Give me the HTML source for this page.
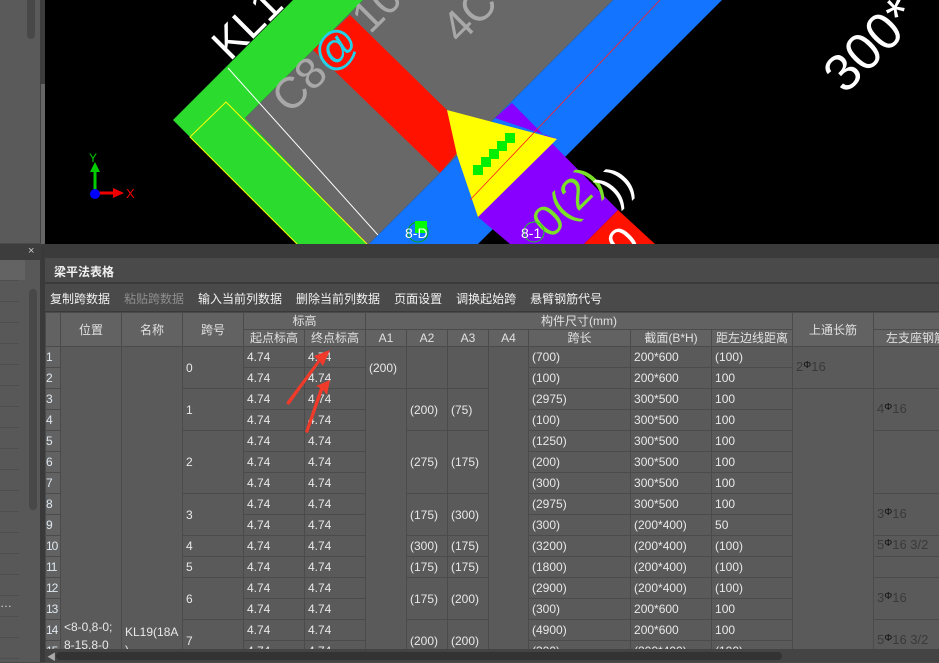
<!DOCTYPE html>
<html><head><meta charset="utf-8"><style>
*{margin:0;padding:0;box-sizing:border-box}
body{width:939px;height:662px;overflow:hidden;background:#4a4a4a;font-family:"Liberation Sans","Noto Sans CJK SC",sans-serif;position:relative}
.abs{position:absolute}
table{border-collapse:collapse;table-layout:fixed;font-size:12px;color:#e8e8e8}
td{border:1px solid #4b4b4b;background:#5a5a5a;padding:0 0 0 3px;white-space:nowrap;overflow:hidden;vertical-align:middle;line-height:14px;height:21px}
tr.h td{background:#626262;text-align:center;padding:0;color:#e0e0e0;height:17px;line-height:14px}
td.rn{background:#626262;padding:0;color:#dfe8f0;font-size:12px;letter-spacing:-1px}
.r{color:#3a3a3a;font-size:13px}
.r b{font-weight:normal;color:#111;font-size:10px;position:relative;top:-3px}
</style></head><body>
<div class="abs" style="left:0;top:0;width:41px;height:243px;background:#5a5a5a;border-right:1px solid #3e3e3e"></div>
<div class="abs" style="left:27px;top:0;width:8px;height:39px;background:#484848;border-radius:0 0 4px 4px"></div>
<div class="abs" style="left:41px;top:0;width:4px;height:84px;background:#3d3d3d"></div>
<div class="abs" style="left:41px;top:84px;width:4px;height:160px;background:#666"></div>
<div class="abs" style="left:0;top:244px;width:45px;height:16px;background:#3d3d3d;color:#ccc;font-size:11px"><span style="position:absolute;left:28px;top:1px">×</span></div>
<div class="abs" style="left:0;top:260px;width:41px;height:402px;background:#585858;border-right:1px solid #3a3a3a"></div>
<div class="abs" style="left:0;top:260px;width:25px;height:20px;background:#636363"></div>
<div class="abs" style="left:29px;top:289px;width:8px;height:221px;background:#484848;border-radius:4px"></div>
<div class="abs" style="left:0;top:260px;width:41px;height:402px;background:repeating-linear-gradient(to bottom,transparent 0,transparent 20px,#4e4e4e 20px,#4e4e4e 21px);clip-path:inset(0 22px 0 0)"></div>
<div class="abs" style="left:0;top:596px;color:#ddd;font-size:12px">…</div>
<div class="abs" style="left:41px;top:244px;width:4px;height:418px;background:#3a3a3a"></div>

<svg class="abs" style="left:45px;top:0" width="894" height="244" viewBox="45 0 894 244">
<rect x="45" y="0" width="894" height="244" fill="#000"/>
<polygon points="245,118 363,0 613,0 369,244 367,244" fill="#686868"/>
<polygon points="173,120 293,0 363,0 245,118 367,244 297,244" fill="#2bdc2f"/>
<polyline points="297,244 190,137 226,102 367,244" fill="none" stroke="#ffff00" stroke-width="1"/>
<line x1="228" y1="68" x2="386" y2="244" stroke="#fff" stroke-width="1"/>
<polygon points="350,15 447,110 457,153 440,173 313,50" fill="#ff1200"/>
<polygon points="613,0 722,0 478,244 369,244" fill="#1274ff"/>
<polygon points="512,103 618,210 584,244 510,244 478,217 557,139 495,118" fill="#8800ff"/>
<polygon points="618,210 655,244 584,244" fill="#ff1200"/>
<polygon points="447,110 557,139 478,217 457,155" fill="#ffff00"/>
<g fill="#00ee00"><rect x="505" y="133" width="10" height="10"/><rect x="497" y="141" width="10" height="10"/><rect x="489" y="149" width="10" height="10"/><rect x="481" y="157" width="10" height="10"/><rect x="473" y="165" width="10" height="10"/></g>
<line x1="660" y1="0" x2="470" y2="200" stroke="#ff2020" stroke-width="0.8"/>
<g font-family="Liberation Sans" font-size="44">
<text x="0" y="0" fill="#fff" transform="translate(230,62) rotate(-45)">KL1</text>
<text x="0" y="0" fill="#a8a8a8" transform="translate(290,115) rotate(-45)">C8</text>
<text x="0" y="0" fill="#22d0e8" transform="translate(330,75) rotate(-45)">@</text>
<text x="0" y="0" fill="#a8a8a8" transform="translate(370,35) rotate(-45)">10</text>
<text x="0" y="0" fill="#a8a8a8" transform="translate(460,45) rotate(-45)">4C</text>
<text x="0" y="0" fill="#fff" font-size="52" transform="translate(845,95) rotate(-45)">300*</text>
<text x="0" y="0" fill="#7be02a" transform="translate(550,240) rotate(-45)">0(2)</text>
<text x="0" y="0" fill="#fff" transform="translate(615,205) rotate(-45)">))</text>
<text x="0" y="0" fill="#fff" transform="translate(625,262) rotate(-45)">0</text>
</g>
<circle cx="418" cy="232" r="10" fill="none" stroke="#0a0" /><rect x="415" y="221" width="12" height="12" fill="#0f0"/>
<text x="405" y="238" fill="#fff" font-size="14" font-family="Liberation Sans">8-D</text>
<circle cx="534" cy="232" r="10" fill="none" stroke="#2c2"/>
<text x="521" y="238" fill="#fff" font-size="14" font-family="Liberation Sans">8-1</text>
<line x1="95" y1="193" x2="95" y2="168" stroke="#0c0" stroke-width="3"/><polygon points="90,172 100,172 95,162" fill="#0c0"/>
<line x1="95" y1="193" x2="118" y2="193" stroke="#e00" stroke-width="3"/><polygon points="113,188 124,193 113,198" fill="#e00"/>
<circle cx="95" cy="194" r="5" fill="#00f"/>
<text x="89" y="162" fill="#0c0" font-size="12">Y</text><text x="126" y="198" fill="#e00" font-size="13">X</text>
</svg>

<div class="abs" style="left:45px;top:244px;width:894px;height:14px;background:#3b3b3b"></div>
<div class="abs" style="left:45px;top:258px;width:894px;height:24px;background:#4a4a4a;color:#f0f0f0;font-size:12px;font-weight:bold;padding:5px 0 0 9px">梁平法表格</div>
<div class="abs" style="left:45px;top:282px;width:894px;height:2px;background:#3a3a3a"></div>
<div class="abs" style="left:45px;top:284px;width:894px;height:27px;background:#4a4a4a;color:#f2f2f2;font-size:12px;padding:6px 0 0 5px">
<span>复制跨数据</span><span style="margin-left:14px;color:#8e8e8e">粘贴跨数据</span><span style="margin-left:14px">输入当前列数据</span><span style="margin-left:14px">删除当前列数据</span><span style="margin-left:14px">页面设置</span><span style="margin-left:14px">调换起始跨</span><span style="margin-left:14px">悬臂钢筋代号</span></div>
<div class="abs" style="left:45px;top:311px;width:894px;height:2px;background:#3a3a3a"></div>

<div class="abs" style="left:45px;top:312px;width:894px;height:337px;overflow:hidden;background:#5a5a5a">
<table style="width:1000px">
<colgroup><col style="width:15px"><col style="width:61px"><col style="width:61px"><col style="width:61px"><col style="width:61px"><col style="width:61px"><col style="width:41px"><col style="width:41px"><col style="width:41px"><col style="width:40px"><col style="width:102px"><col style="width:81px"><col style="width:81px"><col style="width:81px"><col style="width:172px"></colgroup>
<tr class="h"><td rowspan="2"></td><td rowspan="2">位置</td><td rowspan="2">名称</td><td rowspan="2">跨号</td><td colspan="2">标高</td><td colspan="7">构件尺寸(mm)</td><td rowspan="2">上通长筋</td><td></td></tr>
<tr class="h"><td>起点标高</td><td>终点标高</td><td>A1</td><td>A2</td><td>A3</td><td>A4</td><td>跨长</td><td>截面(B*H)</td><td>距左边线距离</td><td style="text-align:left;padding-left:12px">左支座钢筋</td></tr>
<tr><td class="rn">1</td><td rowspan="15" style="vertical-align:top;padding-top:271px;line-height:18px">&lt;8-0,8-0;<br>8-15,8-0</td><td rowspan="15" style="vertical-align:top;padding-top:276px;line-height:18px">KL19(18A<br>)</td><td rowspan="2">0</td><td>4.74</td><td>4.74</td><td rowspan="2">(200)</td><td rowspan="2"></td><td rowspan="2"></td><td rowspan="15"></td><td>(700)</td><td>200*600</td><td>(100)</td><td rowspan="2" class="r">2<b>Φ</b>16</td><td rowspan="2"></td></tr>
<tr><td class="rn">2</td><td>4.74</td><td>4.74</td><td>(100)</td><td>200*600</td><td>100</td></tr>
<tr><td class="rn">3</td><td rowspan="2">1</td><td>4.74</td><td>4.74</td><td rowspan="13"></td><td rowspan="2">(200)</td><td rowspan="2">(75)</td><td>(2975)</td><td>300*500</td><td>100</td><td rowspan="13"></td><td rowspan="2" class="r">4<b>Φ</b>16</td></tr>
<tr><td class="rn">4</td><td>4.74</td><td>4.74</td><td>(100)</td><td>300*500</td><td>100</td></tr>
<tr><td class="rn">5</td><td rowspan="3">2</td><td>4.74</td><td>4.74</td><td rowspan="3">(275)</td><td rowspan="3">(175)</td><td>(1250)</td><td>300*500</td><td>100</td><td rowspan="3"></td></tr>
<tr><td class="rn">6</td><td>4.74</td><td>4.74</td><td>(200)</td><td>300*500</td><td>100</td></tr>
<tr><td class="rn">7</td><td>4.74</td><td>4.74</td><td>(300)</td><td>300*500</td><td>100</td></tr>
<tr><td class="rn">8</td><td rowspan="2">3</td><td>4.74</td><td>4.74</td><td rowspan="2">(175)</td><td rowspan="2">(300)</td><td>(2975)</td><td>300*500</td><td>100</td><td rowspan="2" class="r">3<b>Φ</b>16</td></tr>
<tr><td class="rn">9</td><td>4.74</td><td>4.74</td><td>(300)</td><td>(200*400)</td><td>50</td></tr>
<tr><td class="rn">10</td><td>4</td><td>4.74</td><td>4.74</td><td>(300)</td><td>(175)</td><td>(3200)</td><td>(200*400)</td><td>(100)</td><td class="r">5<b>Φ</b>16 3/2</td></tr>
<tr><td class="rn">11</td><td>5</td><td>4.74</td><td>4.74</td><td>(175)</td><td>(175)</td><td>(1800)</td><td>(200*400)</td><td>(100)</td><td></td></tr>
<tr><td class="rn">12</td><td rowspan="2">6</td><td>4.74</td><td>4.74</td><td rowspan="2">(175)</td><td rowspan="2">(200)</td><td>(2900)</td><td>(200*400)</td><td>(100)</td><td rowspan="2" class="r">3<b>Φ</b>16</td></tr>
<tr><td class="rn">13</td><td>4.74</td><td>4.74</td><td>(300)</td><td>200*600</td><td>100</td></tr>
<tr><td class="rn">14</td><td rowspan="2">7</td><td>4.74</td><td>4.74</td><td rowspan="2">(200)</td><td rowspan="2">(200)</td><td>(4900)</td><td>200*600</td><td>100</td><td rowspan="2" class="r">5<b>Φ</b>16 3/2</td></tr>
<tr><td class="rn">15</td><td>4.74</td><td>4.74</td><td>(300)</td><td>(200*400)</td><td>(100)</td></tr>
</table>
</div>
<svg class="abs" style="left:0;top:0" width="939" height="662">
<polygon points="286,403 318,360 314,356 330,350 323,366 320,362 289,405" fill="#f03a2a"/>
<polygon points="305,432 320,388 316,386 330,380 327,395 323,390 308,433" fill="#f03a2a"/>
</svg>
<div class="abs" style="left:45px;top:649px;width:894px;height:13px;background:#444"></div>
<div class="abs" style="left:56px;top:652px;width:726px;height:8px;background:#333;border-radius:4px"></div>
<div class="abs" style="left:47px;top:650px;color:#aaa;font-size:9px">◀</div>
</body></html>
